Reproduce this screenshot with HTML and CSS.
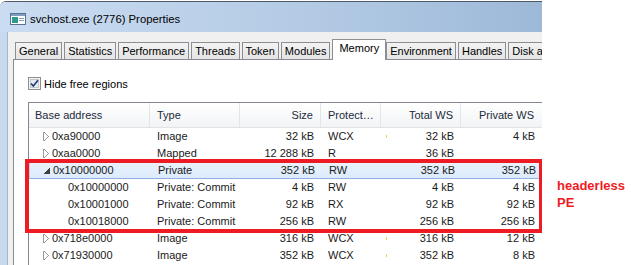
FILE: index.html
```html
<!DOCTYPE html>
<html lang="en">
<head>
    <meta charset="UTF-8">
    <title>svchost.exe (2776) Properties</title>
    <link rel="stylesheet" href="styles.css">
</head>
<body>
<div class="page">
    <div class="window">
        <div class="titlebar">
            <svg class="appicon" width="16" height="12" viewBox="0 0 16 12">
                <rect x="0.5" y="0.5" width="15" height="11" fill="#fff" stroke="#5a7392"/>
                <rect x="1" y="1" width="14" height="2" fill="#7f9cc0"/>
                <rect x="2" y="4" width="6" height="6" fill="#2f9a8a"/>
                <rect x="9" y="5" width="5" height="1" fill="#8a9bb0"/>
                <rect x="9" y="7" width="5" height="1" fill="#8a9bb0"/>
            </svg>
            <span>svchost.exe (2776) Properties</span>
        </div>
        <div class="frame">
            <div class="client">
                <div class="tabs">
                    <div class="tab">General</div>
                    <div class="tab">Statistics</div>
                    <div class="tab">Performance</div>
                    <div class="tab">Threads</div>
                    <div class="tab">Token</div>
                    <div class="tab">Modules</div>
                    <div class="tab active">Memory</div>
                    <div class="tab">Environment</div>
                    <div class="tab">Handles</div>
                    <div class="tab">Disk a</div>
                </div>
                <div class="panel">
                    <label class="hidefree">
                        <svg class="check" width="13" height="13" viewBox="0 0 13 13">
                            <rect x="0.5" y="0.5" width="12" height="12" fill="#f4f4f4" stroke="#8e8f8f"/>
                            <rect x="2.5" y="2.5" width="8" height="8" fill="#e6eaf0" stroke="#c3c8cf"/>
                            <path d="M3 6.5 L5.3 9 L10 3.2" fill="none" stroke="#1f3a70" stroke-width="1.6"/>
                        </svg>
                        Hide free regions
                    </label>

                    <div class="list">
                        <div class="row head">
                            <div class="cell first">Base address</div>
                            <div class="cell">Type</div>
                            <div class="cell num">Size</div>
                            <div class="cell">Protect…</div>
                            <div class="cell num">Total WS</div>
                            <div class="cell num last">Private WS</div>
                        </div>

                        <div class="row">
                            <div class="cell first"><span class="exp closed"></span>0xa90000</div>
                            <div class="cell">Image</div>
                            <div class="cell num">32 kB</div>
                            <div class="cell">WCX</div>
                            <div class="cell num split"><span class="bar"></span>32 kB</div>
                            <div class="cell num last">4 kB</div>
                        </div>
                        <div class="row">
                            <div class="cell first"><span class="exp closed"></span>0xaa0000</div>
                            <div class="cell">Mapped</div>
                            <div class="cell num">12 288 kB</div>
                            <div class="cell">R</div>
                            <div class="cell num">36 kB</div>
                            <div class="cell num last"></div>
                        </div>
                        <div class="row selected">
                            <div class="cell first"><span class="exp open"></span>0x10000000</div>
                            <div class="cell">Private</div>
                            <div class="cell num">352 kB</div>
                            <div class="cell">RW</div>
                            <div class="cell num">352 kB</div>
                            <div class="cell num last">352 kB</div>
                        </div>
                        <div class="row">
                            <div class="cell first child">0x10000000</div>
                            <div class="cell">Private: Commit</div>
                            <div class="cell num">4 kB</div>
                            <div class="cell">RW</div>
                            <div class="cell num">4 kB</div>
                            <div class="cell num last">4 kB</div>
                        </div>
                        <div class="row">
                            <div class="cell first child">0x10001000</div>
                            <div class="cell">Private: Commit</div>
                            <div class="cell num">92 kB</div>
                            <div class="cell">RX</div>
                            <div class="cell num">92 kB</div>
                            <div class="cell num last">92 kB</div>
                        </div>
                        <div class="row">
                            <div class="cell first child">0x10018000</div>
                            <div class="cell">Private: Commit</div>
                            <div class="cell num">256 kB</div>
                            <div class="cell">RW</div>
                            <div class="cell num">256 kB</div>
                            <div class="cell num last">256 kB</div>
                        </div>
                        <div class="row">
                            <div class="cell first"><span class="exp closed"></span>0x718e0000</div>
                            <div class="cell">Image</div>
                            <div class="cell num">316 kB</div>
                            <div class="cell">WCX</div>
                            <div class="cell num split"><span class="bar"></span>316 kB</div>
                            <div class="cell num last">12 kB</div>
                        </div>
                        <div class="row">
                            <div class="cell first"><span class="exp closed"></span>0x71930000</div>
                            <div class="cell">Image</div>
                            <div class="cell num">352 kB</div>
                            <div class="cell">WCX</div>
                            <div class="cell num split"><span class="bar"></span>352 kB</div>
                            <div class="cell num last">8 kB</div>
                        </div>
                    </div>
                </div>
            </div>
        </div>
        <!-- red marker drawn over the list -->
        <div class="highlight"></div>
    </div>
    <div class="note">headerless<br>PE</div>
</div>
</body>
</html>
```

FILE: styles.css
```css
*{
    margin:0;
    padding:0;
    box-sizing:border-box;
}
body{
    background:#fff;
    font-family:"Liberation Sans", Arial, sans-serif;
    font-size:11px;
    color:#1a1a1a;
}
.page{
    display:flex;
    width:631px;
    height:265px;
    overflow:hidden;
}
.window{
    position:relative;
    width:542px;
    height:265px;
    flex:none;
    display:flex;
    flex-direction:column;
    overflow:hidden;
    border-top:1px solid #4f5a66;
    margin-top:1px;
    border-top-left-radius:6px;
}
.titlebar{
    height:30px;
    flex:none;
    display:flex;
    align-items:center;
    padding:4px 0 0 10px;
    background:linear-gradient(to right, #cadcf1, #b4cbe5 55%, #9db9d8);
    font-size:11.3px;
    color:#000;
}
.appicon{
    margin-right:4px;
}
.frame{
    flex:1;
    display:flex;
    border-left:7px solid #c7d9ef;
}
.client{
    flex:1;
    display:flex;
    flex-direction:column;
    background:#f0f0f0;
    border-left:1px solid #a7b7ca;
    padding:7px 0 0 5px;
}
.tabs{
    display:flex;
    align-items:flex-end;
    height:20px;
    padding-left:2px;
    position:relative;
    z-index:1;
}
.tab{
    height:17px;
    line-height:17px;
    padding:0 3px;
    margin-right:2px;
    border:1px solid #8c8e94;
    border-bottom:none;
    background:linear-gradient(#f3f3f3, #e4e4e4);
    white-space:nowrap;
    color:#000;
}
.tab.active{
    height:21px;
    line-height:17px;
    margin:0 0 -1px 0;
    padding:0 6px;
    background:#fff;
}
.panel{
    flex:1;
    background:#fff;
    border:1px solid #898c95;
    padding:17px 0 0 14px;
}
.hidefree{
    display:flex;
    align-items:center;
    gap:3px;
    height:13px;
    color:#000;
}
.list{
    margin-top:12px;
    width:515px;
    border-top:1px solid #828790;
    border-left:1px solid #828790;
    height:200px;
}
.row{
    display:grid;
    grid-template-columns:121px 90px 81px 60px 80px 82px;
    height:17px;
    line-height:17px;
}
.row.head{
    height:25px;
    line-height:24px;
    background:linear-gradient(#ffffff, #f2f3f5);
    border-bottom:1px solid #e1e3e6;
    color:#1c2a3a;
}
.head .cell{
    border-right:1px solid #e3e5e9;
}
.head .cell.first{
    padding-left:6px;
}
.cell{
    padding:0 7px;
    white-space:nowrap;
    overflow:hidden;
}
.cell.num{
    text-align:right;
}
.cell.last{
    padding-right:8px;
}
.cell.first{
    display:flex;
    align-items:center;
    padding-left:14px;
}
.cell.child{
    padding-left:39px;
}
.cell.split{
    display:flex;
    justify-content:space-between;
    align-items:center;
    padding-left:5px;
}
.bar{
    width:1px;
    height:3px;
    background:#f0cf52;
}
.exp{
    width:9px;
    height:9px;
    flex:none;
}
.exp.closed{
    background:
        linear-gradient(to top right, transparent 48%, #9a9a9a 50%, transparent 60%) 0 0/5px 5px no-repeat,
        linear-gradient(to bottom right, transparent 48%, #9a9a9a 50%, transparent 60%) 0 4px/5px 5px no-repeat;
    border-left:1px solid #9a9a9a;
    width:6px;
    margin-right:3px;
}
.exp.open{
    width:6px;
    height:6px;
    margin:2px 3px 0 0;
    background:linear-gradient(to bottom right, transparent 50%, #404040 50%);
}
.row.selected{
    background:linear-gradient(#eaf3fd, #dcebfc);
    border-bottom:1px solid #8fb3de;
    border-left:1px solid #b9d1ee;
}
.highlight{
    position:absolute;
    left:25px;
    top:157px;
    width:518px;
    height:74px;
    border:4px solid #ed1c24;
}
.note{
    padding:177px 0 0 15px;
    font-size:13px;
    font-weight:bold;
    line-height:17px;
    color:#ed1c24;
}
```
